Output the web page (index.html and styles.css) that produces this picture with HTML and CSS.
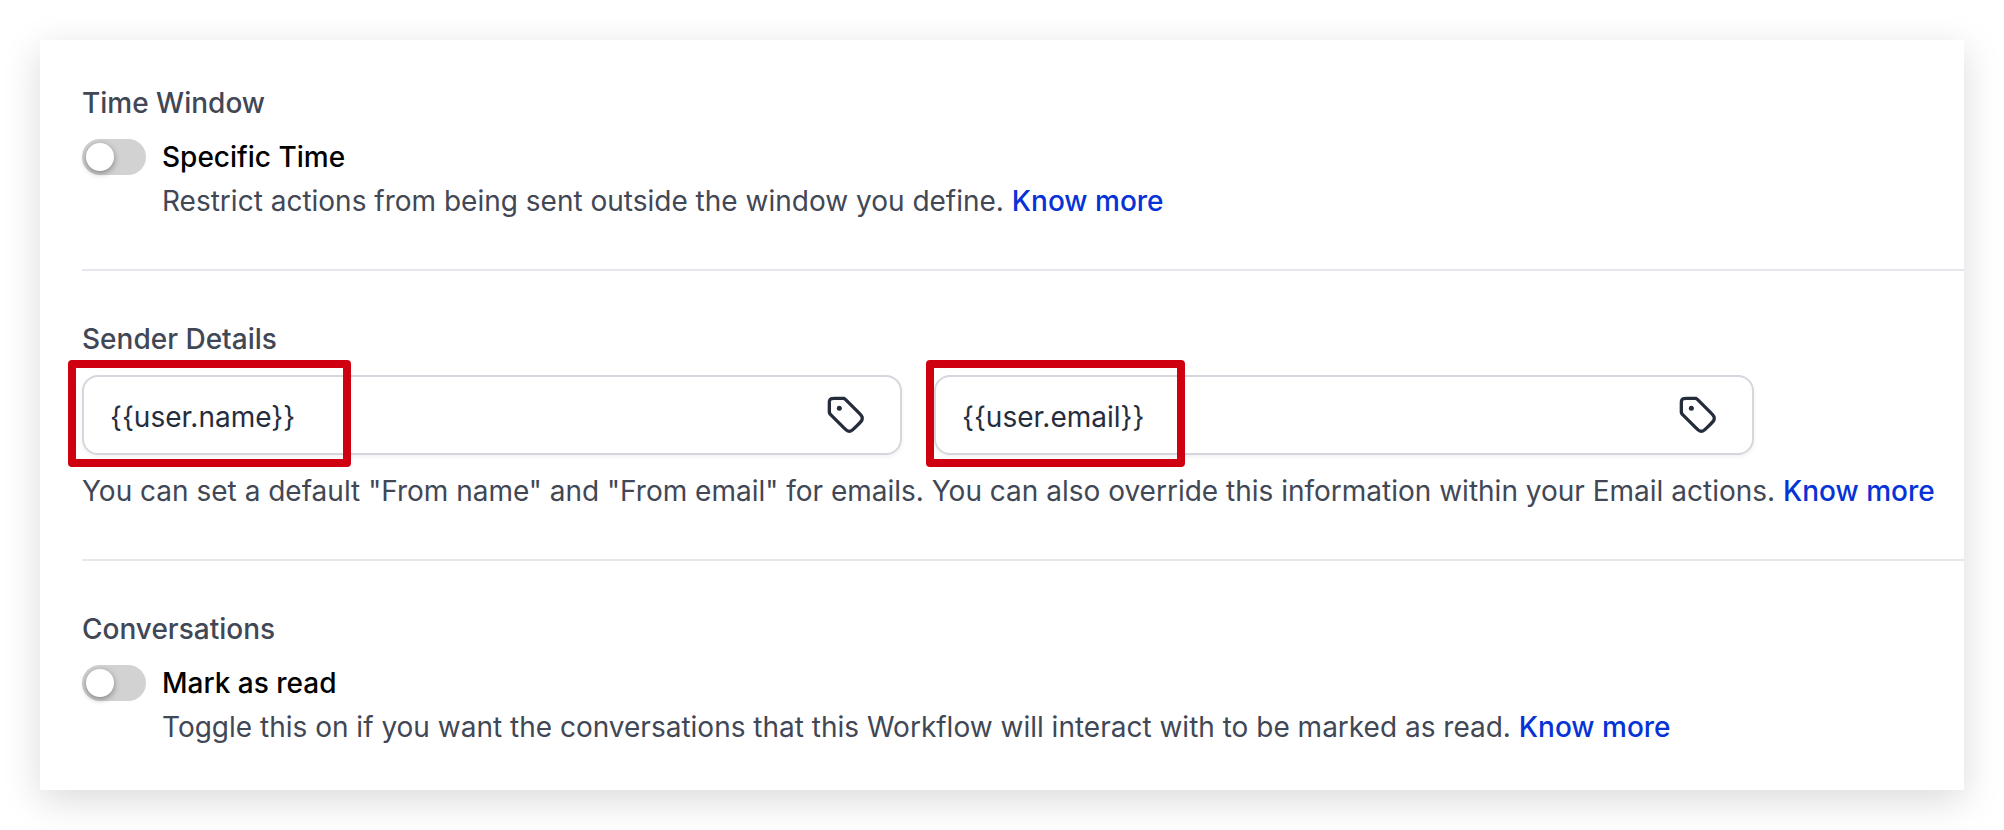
FILE: index.html
```
<!DOCTYPE html>
<html lang="en">
<head>
    <meta charset="UTF-8">
    <meta name="viewport" content="width=device-width, initial-scale=1.0">
    <title>Workflow Settings</title>
    <link rel="stylesheet" href="styles.css">
</head>
<body>
    <main class="card">
        <!-- Time window -->
        <section class="section">
            <h2>Time Window</h2>
            <div class="option">
                <input type="checkbox" role="switch" class="toggle" id="specific-time">
                <div class="option-text">
                    <label for="specific-time">Specific Time</label>
                    <p>Restrict actions from being sent outside the window you define. <a href="#">Know more</a></p>
                </div>
            </div>
        </section>

        <!-- Sender details -->
        <section class="section">
            <h2>Sender Details</h2>
            <div class="fields">
                <div class="field">
                    <input type="text" id="from-name" aria-label="From name" value="{{user.name}}">
                    <button type="button" class="tag-btn" aria-label="Insert name value">
                        <svg viewBox="0 0 24 24" fill="none" stroke="currentColor" stroke-width="2" stroke-linecap="round" stroke-linejoin="round">
                            <path d="M2 5.2v4.475c0 .489 0 .733.055.964.049.204.13.399.24.578.123.201.296.374.642.72l7.669 7.669c1.188 1.188 1.782 1.782 2.467 2.005a3 3 0 0 0 1.854 0c.685-.223 1.279-.817 2.467-2.005l2.212-2.212c1.188-1.188 1.782-1.782 2.005-2.467a3 3 0 0 0 0-1.854c-.223-.685-.817-1.279-2.005-2.467l-7.669-7.669c-.346-.346-.519-.519-.72-.642a2 2 0 0 0-.578-.24C10.408 2 10.164 2 9.675 2H5.2c-1.12 0-1.68 0-2.108.218a2 2 0 0 0-.874.874C2 3.52 2 4.08 2 5.2z"/>
                            <circle cx="8" cy="8" r="1.5" fill="currentColor" stroke="none"/>
                        </svg>
                    </button>
                    <span class="highlight highlight-name"></span>
                </div>
                <div class="field">
                    <input type="text" id="from-email" aria-label="From email" value="{{user.email}}">
                    <button type="button" class="tag-btn" aria-label="Insert email value">
                        <svg viewBox="0 0 24 24" fill="none" stroke="currentColor" stroke-width="2" stroke-linecap="round" stroke-linejoin="round">
                            <path d="M2 5.2v4.475c0 .489 0 .733.055.964.049.204.13.399.24.578.123.201.296.374.642.72l7.669 7.669c1.188 1.188 1.782 1.782 2.467 2.005a3 3 0 0 0 1.854 0c.685-.223 1.279-.817 2.467-2.005l2.212-2.212c1.188-1.188 1.782-1.782 2.005-2.467a3 3 0 0 0 0-1.854c-.223-.685-.817-1.279-2.005-2.467l-7.669-7.669c-.346-.346-.519-.519-.72-.642a2 2 0 0 0-.578-.24C10.408 2 10.164 2 9.675 2H5.2c-1.12 0-1.68 0-2.108.218a2 2 0 0 0-.874.874C2 3.52 2 4.08 2 5.2z"/>
                            <circle cx="8" cy="8" r="1.5" fill="currentColor" stroke="none"/>
                        </svg>
                    </button>
                    <span class="highlight highlight-email"></span>
                </div>
            </div>
            <p>You can set a default "From name" and "From email" for emails. You can also override this information within your Email actions. <a href="#">Know more</a></p>
        </section>

        <!-- Conversations -->
        <section class="section">
            <h2>Conversations</h2>
            <div class="option">
                <input type="checkbox" role="switch" class="toggle" id="mark-read">
                <div class="option-text">
                    <label for="mark-read">Mark as read</label>
                    <p>Toggle this on if you want the conversations that this Workflow will interact with to be marked as read. <a href="#">Know more</a></p>
                </div>
            </div>
        </section>
    </main>
</body>
</html>
```
FILE: styles.css
```
* {
    box-sizing: border-box;
}
body {
    margin: 0;
    padding: 40px;
    background-color: #fff;
    font-family: Inter, sans-serif;
    font-size: 28px;
    line-height: 44px;
    color: #414754;
}
.card {
    padding-left: 42px;
    background-color: #fff;
    box-shadow: 0 10px 36px rgba(0, 0, 0, 0.15);
}
.section {
    padding: 48px 0 46px;
    border-bottom: 2px solid #e4e7ec;
}
.section:first-child {
    padding-top: 43px;
}
.section:last-child {
    padding-bottom: 41px;
    border-bottom: none;
}
h2 {
    margin: 0;
    font-size: 28px;
    line-height: 40px;
    font-weight: 500;
}
p {
    margin: 0;
}
a {
    color: #0633d6;
    font-weight: 500;
    text-decoration: none;
}

/* Toggle rows */
.option {
    display: flex;
    align-items: flex-start;
    gap: 16px;
    margin-top: 12px;
}
.option-text label {
    display: block;
    color: #000;
    font-weight: 500;
}
.toggle {
    appearance: none;
    flex: none;
    width: 64px;
    height: 36px;
    margin: 4px 0 0;
    padding: 4px;
    border-radius: 18px;
    background-color: #d2d2d2;
    cursor: pointer;
}
.toggle::before {
    content: "";
    display: block;
    width: 28px;
    height: 28px;
    border-radius: 50%;
    background-color: #fff;
    box-shadow: 0 2px 6px rgba(0, 0, 0, 0.4);
}
.toggle:checked {
    background-color: #0633d6;
}
.toggle:checked::before {
    margin-left: auto;
}

/* Sender inputs */
.fields {
    display: flex;
    gap: 32px;
    margin: 16px 0 14px;
}
.field {
    position: relative;
    display: flex;
    align-items: center;
    flex: 1;
    max-width: 820px;
    height: 80px;
    padding: 0 34px 0 26px;
    border: 2px solid #d5d7de;
    border-radius: 16px;
    box-shadow: 0 2px 4px rgba(16, 24, 40, 0.06);
}
.field input {
    flex: 1;
    min-width: 0;
    padding: 4px 0 0;
    border: none;
    outline: none;
    background: none;
    font: inherit;
    color: #252d3d;
}
.tag-btn {
    width: 40px;
    height: 40px;
    padding: 0;
    border: none;
    background: none;
    color: #252d3d;
    cursor: pointer;
}
.tag-btn svg {
    display: block;
}

/* Red frames over the merge tags */
.highlight {
    position: absolute;
    top: -17px;
    height: 107px;
    border: 8px solid #cf000f;
    border-radius: 4px;
    pointer-events: none;
}
.highlight-name {
    left: -16px;
    width: 283px;
}
.highlight-email {
    left: -10px;
    width: 259px;
}
```
